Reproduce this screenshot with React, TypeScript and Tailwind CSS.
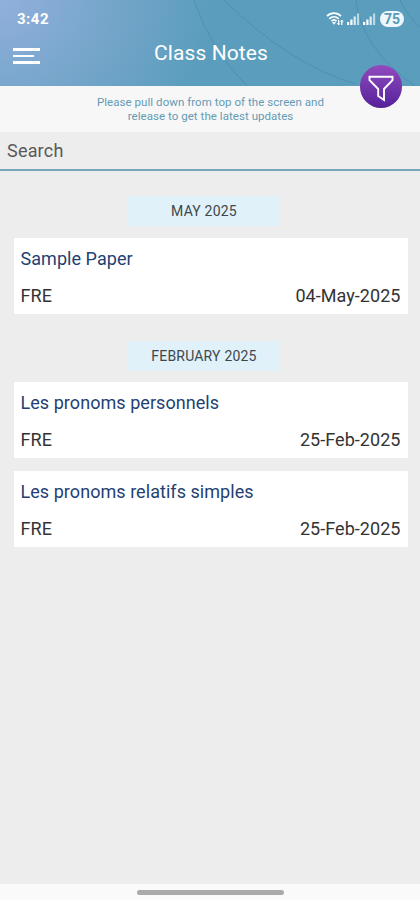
type Note = { title: string; subject: string; date: string };

const may: Note[] = [{ title: 'Sample Paper', subject: 'FRE', date: '04-May-2025' }];
const february: Note[] = [
  { title: 'Les pronoms personnels', subject: 'FRE', date: '25-Feb-2025' },
  { title: 'Les pronoms relatifs simples', subject: 'FRE', date: '25-Feb-2025' },
];

function Signal() {
  return (
    <svg width="13" height="12" viewBox="0 0 13 12" fill="white">
      <rect x="0" y="9" width="2.2" height="3" />
      <rect x="3.3" y="6.5" width="2.2" height="5.5" />
      <rect x="6.6" y="3.5" width="2.2" height="8.5" opacity=".8" />
      <rect x="10" y="0.5" width="2.2" height="11.5" opacity=".6" />
    </svg>
  );
}

function Wifi() {
  return (
    <svg width="18" height="14" viewBox="0 0 18 14" fill="none" stroke="white" strokeWidth="1.7">
      <path d="M1 4.2C5 .2 11 .2 15 4.2" />
      <path d="M3.3 6.8c2.8-2.7 6.6-2.7 9.4 0" />
      <path d="M5.5 9.2c1.5-1.5 3.5-1.5 5 0" />
      <path d="M6.5 10.4 8 12.3l1.5-1.9z" fill="white" strokeWidth=".8" />
      <path d="M12.7 8v5M15.8 8v5" strokeWidth="1.3" />
      <path d="m11.2 11 1.5 2 1-1.4M14.5 9.8l1.3-1.8 1.5 2" strokeWidth=".8" />
    </svg>
  );
}

function Header() {
  return (
    <header className="relative h-[86px] bg-[#5b9dbc] bg-[radial-gradient(ellipse_210px_190px_at_0px_0px,#91b0dc_0%,#77a6cb_50%,#5b9dbc_100%)] text-white">
      <svg className="absolute inset-0" width="420" height="86" fill="none" stroke="#4585a6" strokeWidth="1" opacity=".5">
        <path d="M224 0Q290 65 356 84" />
        <path d="M194 0Q211 51 247 86" />
        <path d="M356 0Q361 48 415 86" />
        <path d="M400 0Q408 17 420 27" />
      </svg>
      <div className="relative flex h-[38px] items-center justify-between pl-[17px] pr-4">
        <span className="text-[15px] font-bold leading-none tracking-[0.5px]">3:42</span>
        <div className="flex items-center">
          <Wifi />
          <span className="ml-[3px]"><Signal /></span>
          <span className="ml-[3px]"><Signal /></span>
          <span className="ml-1 flex h-4 w-[24px] items-center justify-center rounded-full bg-[#edf6fa] text-[14px] font-bold leading-none text-[#5a9ab8]">75</span>
        </div>
      </div>
      <div className="relative flex h-9 items-center">
        <div className="ml-[13px] flex flex-col gap-[4px]">
          <i className="block h-[3px] w-[27px] bg-white" />
          <i className="block h-[2px] w-[21px] bg-white" />
          <i className="block h-[3px] w-[27px] bg-white" />
        </div>
        <h1 className="-mt-[5px] ml-[114px] text-[21px] tracking-[0.1px]">Class Notes</h1>
      </div>
      <button aria-label="Filter" className="absolute left-[360px] top-[65px] flex h-[43px] w-[42px] items-center justify-center rounded-full bg-linear-to-b from-[#924abe] to-[#56209a]">
        <svg width="28" height="30" viewBox="0 0 28 30" fill="none" stroke="white" strokeWidth="1.9" strokeLinejoin="miter">
          <path d="M2.5 4.8h23v3.4L17 17v11l-5.8-4V17L2.5 8.2z" />
        </svg>
      </button>
    </header>
  );
}

function Month({ label }: { label: string }) {
  return (
    <h2 className="ml-[128px] flex h-[30px] w-[152px] items-center justify-center bg-[#e0f1fa] text-[14px] tracking-[0.2px] text-[#3e474b]">
      {label}
    </h2>
  );
}

function Card({ note }: { note: Note }) {
  return (
    <article className="ml-[13.5px] mr-[12.5px] flex h-[76px] flex-col justify-between bg-white px-[7px] pb-[6px] pt-[9px]">
      <h3 className="text-[18px] leading-6 tracking-[0.05px] text-[#243f73]">{note.title}</h3>
      <div className="flex justify-between text-[18px] leading-6 tracking-[0.05px] text-[#333]">
        <span>{note.subject}</span>
        <span>{note.date}</span>
      </div>
    </article>
  );
}

export default function App() {
  return (
    <div className="flex h-[900px] w-[420px] flex-col overflow-hidden bg-[#ededed] font-[Roboto,sans-serif]">
      <Header />
      <p className="h-[46px] bg-[#f7f7f7] pl-[1px] pt-[10px] text-center text-[11.5px] leading-[13.5px] tracking-[0.05px] text-[#659bb5]">
        Please pull down from top of the screen and
        <br />
        release to get the latest updates
      </p>
      <div className="flex h-[39px] items-center border-b-2 border-[#78a5be] pl-[7px] text-[18px] tracking-[0.2px] text-[#595959]">
        Search
      </div>
      <main className="flex flex-1 flex-col pt-[25px]">
        <Month label="MAY 2025" />
        <div className="mb-[27px] mt-3">
          {may.map((n) => <Card key={n.title} note={n} />)}
        </div>
        <Month label="FEBRUARY 2025" />
        <div className="mt-[11px] flex flex-col gap-[13px]">
          {february.map((n) => <Card key={n.title} note={n} />)}
        </div>
      </main>
      <footer className="flex h-4 justify-center bg-[#fafafa] pt-[6px]">
        <i className="block h-[5px] w-[147px] rounded-full bg-[#aaa]" />
      </footer>
    </div>
  );
}
